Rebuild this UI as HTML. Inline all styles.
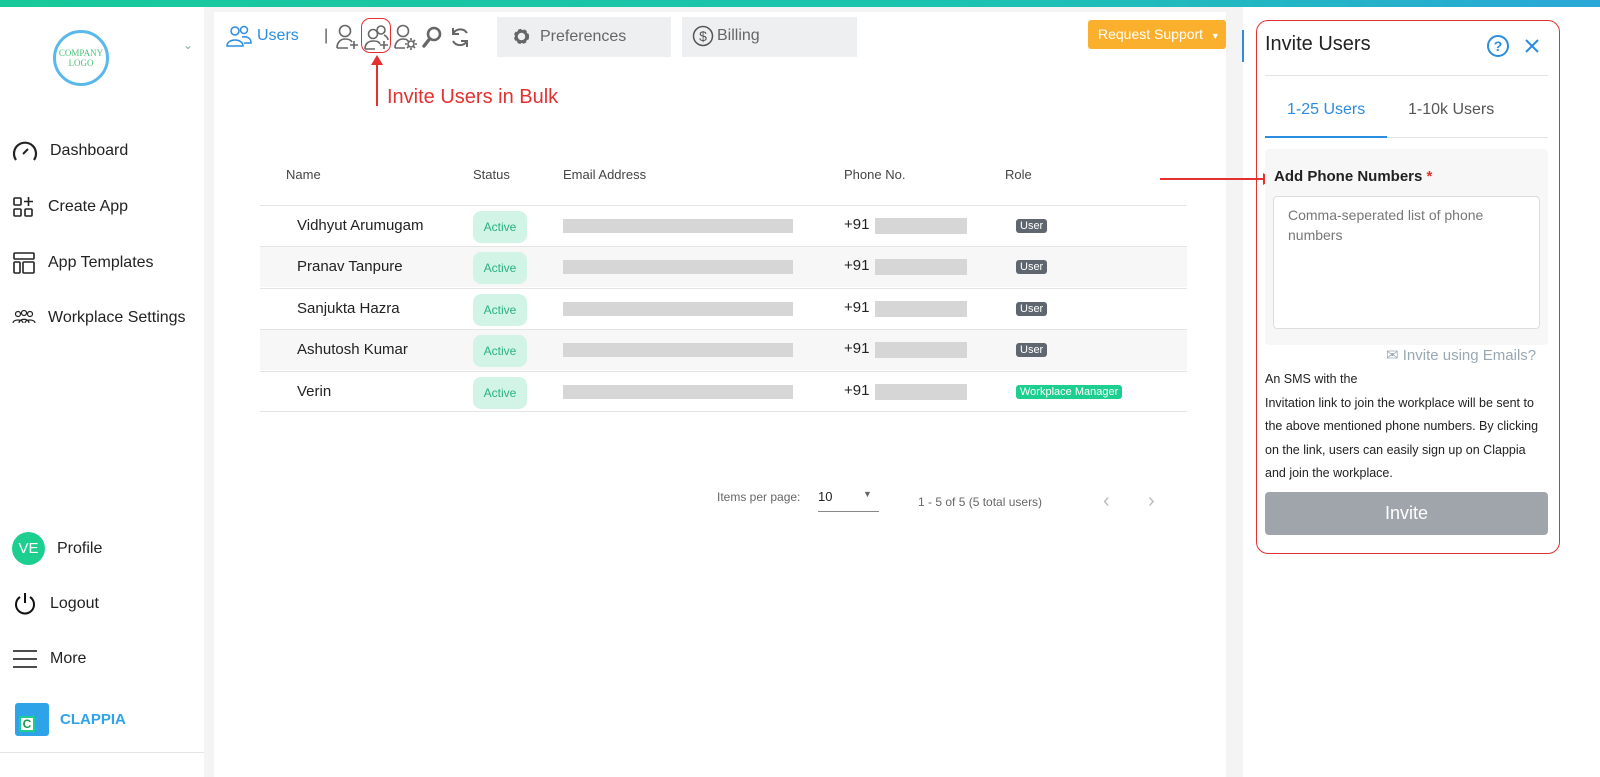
<!DOCTYPE html>
<html><head><meta charset="utf-8"><style>
*{box-sizing:border-box;margin:0;padding:0}
body{width:1600px;height:777px;overflow:hidden;background:#f4f4f5;font-family:"Liberation Sans",sans-serif;position:relative;color:#222}
.a{position:absolute}
.top{left:0;top:0;width:1600px;height:7px;background:linear-gradient(90deg,#17c99a,#1cc3b0 60%,#2aa8d8)}
.side{left:0;top:7px;width:204px;height:770px;background:#fff}
.nav{left:12px;font-size:16px;color:#222;display:flex;align-items:center;gap:12px}
.main{left:214px;top:12px;width:1012px;height:765px;background:#fff}
.right{left:1243px;top:7px;width:357px;height:770px;background:#fff}
.th{top:167px;font-size:13px;color:#444}
.row{left:260px;width:927px;height:41px;border-top:1px solid #e4e4e4}
.row.alt{background:#f7f7f7}
.nm{position:absolute;left:37px;top:11px;font-size:15px;color:#222}
.act{position:absolute;left:213px;top:5px;width:54px;height:32px;background:#d2f4e7;border-radius:8px;color:#29b27f;font-size:12px;text-align:center;line-height:32px}
.em{position:absolute;left:303px;top:13px;width:230px;height:14px;background:#d6d6d6}
.ph{position:absolute;left:584px;top:10px;font-size:15px}
.pb{position:absolute;left:615px;top:12px;width:92px;height:16px;background:#d6d6d6}
.ub{position:absolute;left:756px;top:13px;background:#5f6670;color:#fff;font-size:11px;padding:1px 4px;border-radius:3px}
.wm{background:#1dcf8f}
</style></head><body>
<div class="a top"></div>
<div class="a side"></div>
<div class="a" style="left:53px;top:30px;width:56px;height:56px;border-radius:50%;border:3px solid #5ab9ea;text-align:center;font-family:'Liberation Serif',serif;font-size:9px;color:#4bc27a;line-height:10px;padding-top:15px">COMPANY<br>LOGO</div>
<div class="a" style="left:183px;top:38px;color:#8aa;font-size:12px">&#8964;</div>
<div class="a nav" style="top:140px"><svg width="26" height="22" viewBox="0 0 26 22"><path d="M4 20A11 11 0 1 1 22 20" fill="none" stroke="#222" stroke-width="2.2"/><path d="M11 14L16 9" stroke="#222" stroke-width="2"/></svg>Dashboard</div>
<div class="a nav" style="top:196px"><svg width="24" height="22" viewBox="0 0 24 22"><g fill="none" stroke="#222" stroke-width="1.6"><rect x="2" y="2" width="7" height="7" rx="1"/><rect x="2" y="13" width="7" height="7" rx="1"/><rect x="13" y="13" width="7" height="7" rx="1"/><path d="M16.5 1v9M12 5.5h9"/></g></svg>Create App</div>
<div class="a nav" style="top:252px"><svg width="24" height="22" viewBox="0 0 24 22"><g fill="none" stroke="#222" stroke-width="1.6"><rect x="2" y="1" width="20" height="6" rx="1"/><rect x="2" y="10" width="6" height="11" rx="1"/><rect x="11" y="10" width="11" height="11" rx="1"/></g></svg>App Templates</div>
<div class="a nav" style="top:308px"><svg width="24" height="20" viewBox="0 0 24 20"><g fill="none" stroke="#222" stroke-width="1.2"><circle cx="6" cy="6" r="2.5"/><circle cx="12" cy="5" r="2.5"/><circle cx="18" cy="6" r="2.5"/><path d="M1 15c0-4 10-4 10 0M7 15c0-5 10-5 10 0M13 15c0-4 10-4 10 0"/></g></svg>Workplace Settings</div>
<div class="a nav" style="top:532px"><span style="width:33px;height:33px;border-radius:50%;background:#1dcf8f;color:#fff;font-size:15px;text-align:center;line-height:33px;display:inline-block">VE</span>Profile</div>
<div class="a nav" style="top:591px"><svg width="26" height="26" viewBox="0 0 26 26"><path d="M8 6A9 9 0 1 0 18 6" fill="none" stroke="#111" stroke-width="2"/><path d="M13 2v10" stroke="#111" stroke-width="2"/></svg>Logout</div>
<div class="a nav" style="top:648px"><svg width="26" height="22" viewBox="0 0 26 22"><path d="M1 3h24M1 11h24M1 19h24" stroke="#111" stroke-width="1.6"/></svg>More</div>
<div class="a" style="left:15px;top:703px;width:34px;height:33px;background:#2fa3e8;border-radius:3px"><div style="position:absolute;left:4px;top:13px;width:16px;height:16px;background:#fff;border:2px solid #1dcf8f;color:#1a9a4a;font-size:12px;font-weight:bold;line-height:12px;text-align:center">C</div></div>
<div class="a" style="left:60px;top:711px;color:#2fa3e8;font-weight:bold;font-size:15px">CLAPPIA</div>
<div class="a" style="left:0;top:752px;width:204px;height:1px;background:#e4e4e4"></div>

<div class="a main"></div>
<div class="a" style="left:214px;top:12px;width:270px;height:45px;background:#fff"></div>
<div class="a" style="left:226px;top:24px"><svg width="26" height="24" viewBox="0 0 26 24"><g fill="none" stroke="#2a8de0" stroke-width="1.5"><circle cx="9" cy="7" r="4"/><circle cx="18" cy="6" r="3.5"/><path d="M1 22c0-8 16-8 16 0zM16 13c5-1 9 1 9 6h-7"/></g></svg></div>
<div class="a" style="left:257px;top:27px;font-size:16px;color:#2a8de0">Users</div>
<div class="a" style="left:324px;top:27px;font-size:16px;color:#555">|</div>
<svg class="a" style="left:335px;top:24px" width="24" height="26" viewBox="0 0 24 26"><g fill="none" stroke="#666" stroke-width="1.6"><circle cx="10" cy="7" r="5.5"/><path d="M2 24c0-6 4-9 8-9s6 1 7 3M2 24h11M19 17v8M15 21h8"/></g></svg>
<svg class="a" style="left:364px;top:24px" width="26" height="26" viewBox="0 0 26 26"><g fill="none" stroke="#666" stroke-width="1.6"><circle cx="9" cy="10" r="4.5"/><circle cx="17" cy="6" r="4"/><path d="M1 25c0-5 3-8 8-8s6 1 7 3M1 25h10M20 17v8M16 21h8M20 11c2 1 4 3 4 5"/></g></svg>
<div class="a" style="left:361px;top:18px;width:30px;height:35px;border:1.5px solid #e53030;border-radius:9px"></div>
<svg class="a" style="left:393px;top:24px" width="24" height="26" viewBox="0 0 24 26"><g fill="none" stroke="#666" stroke-width="1.6"><circle cx="10" cy="7" r="5.5"/><path d="M2 24c0-6 4-9 8-9 2 0 3 0 4 1M2 24h10"/><circle cx="18" cy="20" r="3"/><path d="M18 14v2M18 24v2M12 20h2M22 20h2M14 16l1.5 1.5M20.5 22.5L22 24M22 16l-1.5 1.5M14 24l1.5-1.5"/></g></svg>
<svg class="a" style="left:421px;top:25px" width="22" height="24" viewBox="0 0 22 24"><g fill="none" stroke="#666"><circle cx="13" cy="9" r="6" stroke-width="2.6"/><path d="M8.5 14L3 21" stroke-width="3.4" stroke-linecap="round"/></g></svg>
<svg class="a" style="left:449px;top:25px" width="22" height="24" viewBox="0 0 22 24"><g fill="none" stroke="#666" stroke-width="2"><path d="M18 8A8 8 0 0 0 4 9M4 3v6h6M4 16a8 8 0 0 0 14 0M18 22v-6h-6"/></g></svg>
<div class="a" style="left:376px;top:60px;width:2px;height:46px;background:#e53030"></div>
<div class="a" style="left:371px;top:55px;width:0;height:0;border-left:6px solid transparent;border-right:6px solid transparent;border-bottom:10px solid #e53030"></div>
<div class="a" style="left:387px;top:86px;font-size:20px;color:#e53030">Invite Users in Bulk</div>
<div class="a" style="left:497px;top:17px;width:174px;height:40px;background:#eeeff1"></div>
<div class="a" style="left:512px;top:27px;font-size:16px;color:#666;display:flex;align-items:center;gap:9px"><svg width="19" height="19" viewBox="0 0 20 20"><circle cx="10" cy="10" r="6" fill="none" stroke="#666" stroke-width="4" stroke-dasharray="3 2"/><circle cx="10" cy="10" r="5.5" fill="none" stroke="#666" stroke-width="3"/></svg>Preferences</div>
<div class="a" style="left:682px;top:17px;width:175px;height:40px;background:#eeeff1"></div>
<div class="a" style="left:692px;top:25px;font-size:16px;color:#666;display:flex;align-items:center;gap:3px"><svg width="22" height="22" viewBox="0 0 22 22"><circle cx="11" cy="11" r="9.5" fill="none" stroke="#555" stroke-width="1.5"/><text x="11" y="16" font-size="14" text-anchor="middle" fill="#555" font-family="Liberation Sans">$</text></svg>Billing</div>
<div class="a" style="left:1088px;top:20px;width:138px;height:29px;background:#fbb02d;border-radius:3px;color:#fff;font-size:14px;line-height:29px;padding-left:10px">Request Support &nbsp;<span style="font-size:9px">▼</span></div>

<div class="a th" style="left:286px">Name</div>
<div class="a th" style="left:473px">Status</div>
<div class="a th" style="left:563px">Email Address</div>
<div class="a th" style="left:844px">Phone No.</div>
<div class="a th" style="left:1005px">Role</div>

<div class="a row" style="top:205px"><span class="nm">Vidhyut Arumugam</span><span class="act">Active</span><span class="em"></span><span class="ph">+91</span><span class="pb"></span><span class="ub">User</span></div>
<div class="a row alt" style="top:246px"><span class="nm">Pranav Tanpure</span><span class="act">Active</span><span class="em"></span><span class="ph">+91</span><span class="pb"></span><span class="ub">User</span></div>
<div class="a row" style="top:288px"><span class="nm">Sanjukta Hazra</span><span class="act">Active</span><span class="em"></span><span class="ph">+91</span><span class="pb"></span><span class="ub">User</span></div>
<div class="a row alt" style="top:329px"><span class="nm">Ashutosh Kumar</span><span class="act">Active</span><span class="em"></span><span class="ph">+91</span><span class="pb"></span><span class="ub">User</span></div>
<div class="a row" style="top:371px;border-bottom:1px solid #e4e4e4"><span class="nm">Verin</span><span class="act">Active</span><span class="em"></span><span class="ph">+91</span><span class="pb"></span><span class="ub wm">Workplace Manager</span></div>

<div class="a" style="left:717px;top:490px;font-size:12px;color:#666">Items per page:</div>
<div class="a" style="left:818px;top:489px;width:61px;height:23px;border-bottom:1px solid #888;font-size:13px">10<span style="position:absolute;left:45px;top:0;font-size:9px;color:#666">▼</span></div>
<div class="a" style="left:918px;top:495px;font-size:12px;color:#666">1 - 5 of 5 (5 total users)</div>
<div class="a" style="left:1103px;top:490px;font-size:20px;color:#bbb">‹</div>
<div class="a" style="left:1148px;top:490px;font-size:20px;color:#bbb">›</div>

<div class="a right"></div>
<div class="a" style="left:1160px;top:178px;width:110px;height:2px;background:#e53030"></div>
<div class="a" style="left:1263px;top:173px;border-top:6px solid transparent;border-bottom:6px solid transparent;border-left:10px solid #e53030"></div>
<div class="a" style="left:1242px;top:30px;width:2px;height:32px;background:#2a8de0"></div>
<div class="a" style="left:1256px;top:20px;width:304px;height:534px;border:1.5px solid #e53030;border-radius:12px"></div>
<div class="a" style="left:1265px;top:33px;font-size:20px;color:#222">Invite Users</div>
<svg class="a" style="left:1487px;top:34px" width="60" height="24" viewBox="0 0 60 24"><circle cx="11" cy="12" r="10" fill="none" stroke="#2a8de0" stroke-width="2"/><text x="11" y="17" font-size="14" text-anchor="middle" fill="#2a8de0" font-family="Liberation Sans" font-weight="bold">?</text><path d="M39 6l12 12M51 6L39 18" stroke="#2a8de0" stroke-width="2"/></svg>
<div class="a" style="left:1265px;top:75px;width:283px;height:1px;background:#e4e4e4"></div>
<div class="a" style="left:1287px;top:101px;font-size:16px;color:#2a8de0">1-25 Users</div>
<div class="a" style="left:1408px;top:101px;font-size:16px;color:#555">1-10k Users</div>
<div class="a" style="left:1265px;top:137px;width:283px;height:1px;background:#e4e4e4"></div>
<div class="a" style="left:1265px;top:136px;width:122px;height:2px;background:#2a8de0"></div>
<div class="a" style="left:1265px;top:149px;width:283px;height:196px;background:#f7f7f7;border-radius:4px"></div>
<div class="a" style="left:1274px;top:168px;font-size:15px;font-weight:bold;color:#222">Add Phone Numbers <span style="color:#e53030">*</span></div>
<div class="a" style="left:1273px;top:196px;width:267px;height:133px;background:#fff;border:1px solid #ddd;border-radius:4px;padding:8px 14px;font-size:14px;color:#777;line-height:20px">Comma-seperated list of phone numbers</div>
<div class="a" style="left:1386px;top:346px;font-size:15px;color:#9aa8b2">✉ Invite using Emails?</div>
<div class="a" style="left:1265px;top:368px;font-size:12.5px;color:#222;line-height:23.5px;width:278px">An SMS with the<br>Invitation link to join the workplace will be sent to the above mentioned phone numbers. By clicking on the link, users can easily sign up on Clappia and join the workplace.</div>
<div class="a" style="left:1265px;top:492px;width:283px;height:43px;background:#a0a5ab;border-radius:4px;color:#fff;font-size:18px;text-align:center;line-height:43px">Invite</div>
</body></html>
